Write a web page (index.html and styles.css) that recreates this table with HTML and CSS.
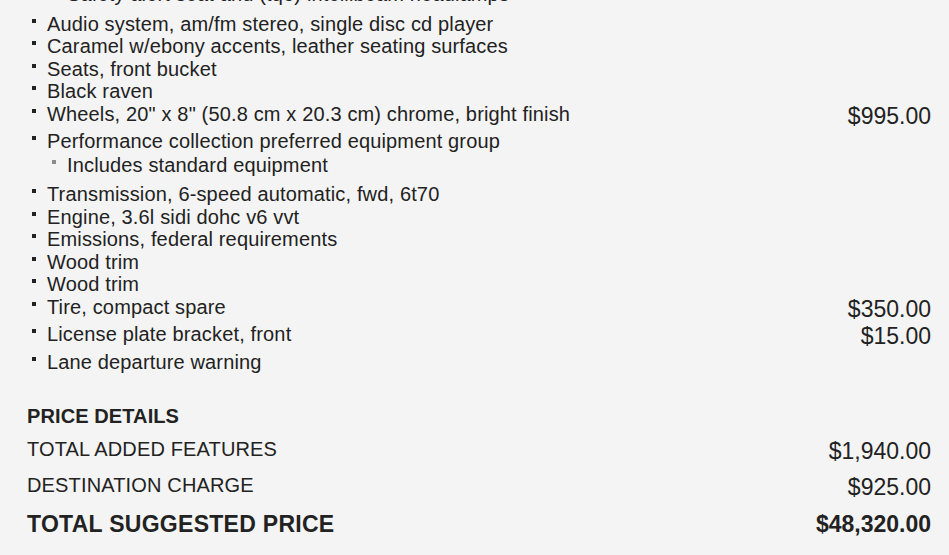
FILE: index.html
```html
<!DOCTYPE html>
<html lang="en">
<head>
<meta charset="utf-8">
<title>Vehicle options and price details</title>
<link rel="stylesheet" href="styles.css">
</head>
<body>
<main class="sheet">
  <div class="list-wrap">
    <ul class="sublist sublist--lead">
      <li class="subitem">Safety alert seat and (tqo) intellibeam headlamps</li>
    </ul>
    <ul class="features">
      <li class="item"><div class="item-body"><span class="desc">Audio system, am/fm stereo, single disc cd player</span></div></li>
      <li class="item"><div class="item-body"><span class="desc">Caramel w/ebony accents, leather seating surfaces</span></div></li>
      <li class="item"><div class="item-body"><span class="desc">Seats, front bucket</span></div></li>
      <li class="item"><div class="item-body"><span class="desc">Black raven</span></div></li>
      <li class="item"><div class="item-body"><span class="desc">Wheels, 20" x 8" (50.8 cm x 20.3 cm) chrome, bright finish</span><span class="price">$995.00</span></div></li>
      <li class="item">
        <div class="item-body item-body--stack">
          <span class="desc">Performance collection preferred equipment group</span>
          <ul class="sublist">
            <li class="subitem">Includes standard equipment</li>
          </ul>
        </div>
      </li>
      <li class="item"><div class="item-body"><span class="desc">Transmission, 6-speed automatic, fwd, 6t70</span></div></li>
      <li class="item"><div class="item-body"><span class="desc">Engine, 3.6l sidi dohc v6 vvt</span></div></li>
      <li class="item"><div class="item-body"><span class="desc">Emissions, federal requirements</span></div></li>
      <li class="item"><div class="item-body"><span class="desc">Wood trim</span></div></li>
      <li class="item"><div class="item-body"><span class="desc">Wood trim</span></div></li>
      <li class="item"><div class="item-body"><span class="desc">Tire, compact spare</span><span class="price">$350.00</span></div></li>
      <li class="item"><div class="item-body"><span class="desc">License plate bracket, front</span><span class="price">$15.00</span></div></li>
      <li class="item"><div class="item-body"><span class="desc">Lane departure warning</span></div></li>
    </ul>
  </div>

  <section class="summary">
    <h2 class="summary-title">PRICE DETAILS</h2>
    <div class="summary-row">
      <span class="summary-label">TOTAL ADDED FEATURES</span>
      <span class="summary-amount">$1,940.00</span>
    </div>
    <div class="summary-row">
      <span class="summary-label">DESTINATION CHARGE</span>
      <span class="summary-amount">$925.00</span>
    </div>
    <div class="summary-row summary-row--total">
      <span class="summary-label">TOTAL SUGGESTED PRICE</span>
      <span class="summary-amount">$48,320.00</span>
    </div>
  </section>
</main>
</body>
</html>
```

FILE: styles.css
```css
* {
  box-sizing: border-box;
}

html,
body {
  margin: 0;
  padding: 0;
  background: #f4f4f4;
}

body {
  font-family: "Liberation Sans", Arial, sans-serif;
  color: #222222;
  overflow: hidden;
}

.sheet {
  padding: 0 18px 0 27px;
}

.list-wrap {
  margin-top: -17px;
  padding-left: 5px;
}

ul {
  list-style: none;
  margin: 0;
  padding: 0;
}

.features {
  font-size: 20px;
}

.desc,
.subitem {
  letter-spacing: 0.15px;
}

.item {
  display: flex;
  align-items: flex-start;
  line-height: 22.5px;
}

.item::before {
  content: "";
  flex: none;
  width: 4px;
  height: 4px;
  margin: 6px 11px 0 0;
  background: #222222;
}

.item-body {
  flex: 1;
  display: flex;
  justify-content: space-between;
  align-items: flex-start;
}

.item-body--stack {
  flex-direction: column;
}

.price {
  font-size: 23px;
  line-height: 27.6px;
  white-space: nowrap;
}

.sublist {
  font-size: 20px;
  margin: 1px 0 7px;
  padding-left: 5px;
}

.sublist--lead {
  margin-top: 0;
  padding-left: 20px;
}

.subitem {
  display: flex;
  align-items: flex-start;
  line-height: 22.5px;
}

.subitem::before {
  content: "";
  flex: none;
  width: 4px;
  height: 4px;
  margin: 6px 11px 0 0;
  background: #8c8c8c;
}

.summary {
  margin-top: 32px;
}

.summary-title {
  margin: 0 0 6px;
  font-size: 20px;
  line-height: 23px;
  font-weight: bold;
  letter-spacing: 0.1px;
}

.summary-row {
  display: flex;
  justify-content: space-between;
  align-items: flex-start;
  padding: 4px 0;
}

.summary-label {
  font-size: 20px;
  line-height: 23px;
  letter-spacing: 0.15px;
}

.summary-amount {
  font-size: 23px;
  line-height: 27.6px;
}

.summary-row--total {
  padding-top: 6px;
  font-weight: bold;
}

.summary-row--total .summary-label {
  font-size: 23px;
  line-height: 27.6px;
  letter-spacing: 0.28px;
}
```
